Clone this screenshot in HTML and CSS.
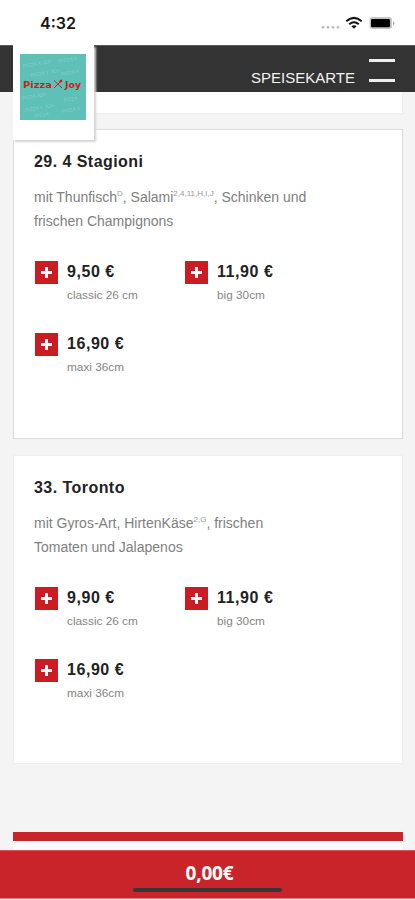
FILE: index.html
```html
<!DOCTYPE html>
<html lang="de">
<head>
<meta charset="utf-8">
<title>Speisekarte</title>
<link rel="stylesheet" href="styles.css">
</head>
<body>
<div class="screen">
  <div class="status">
    <span class="time">4:32</span>
    <svg class="signals" width="76" height="16" viewBox="0 0 76 16">
      <g fill="#bdbdbd"><circle cx="3" cy="11.3" r="1.4"/><circle cx="8" cy="11.3" r="1.4"/><circle cx="13" cy="11.3" r="1.4"/><circle cx="18" cy="11.3" r="1.4"/></g>
      <g fill="none" stroke="#111" stroke-width="2"><path d="M26.3 5.2Q34 -1.5 41.7 5.2"/><path d="M29.2 8.3Q34 4.3 38.8 8.3"/></g>
      <path d="M31.4 10.2Q34 8.4 36.6 10.2L34 12.8Z" fill="#111"/>
      <rect x="49.5" y="1" width="22.5" height="12" rx="3" fill="#c4c4c4"/>
      <rect x="51" y="3" width="19" height="8.200" rx="1.200" fill="#000"/>
      <path d="M73 5q3 2.200 0 4.500z" fill="#aaa"/>
    </svg>
  </div>
  <header class="nav">
    <span class="nav-label">SPEISEKARTE</span>
    <div class="burger"><i></i><i></i></div>
    <div class="logo">
      <svg width="66" height="66" viewBox="0 0 66 66">
        <rect width="66" height="66" fill="#5fc0b8"/>
        <g class="pattern">
          <text transform="translate(3 14) rotate(-10)">PIZZA X JOY</text>
          <text transform="translate(39 9) rotate(-10)">PIZZA X</text>
          <text transform="translate(11 23) rotate(-10)">PIZZA X JOY</text>
          <text transform="translate(41 22) rotate(-10)">PIZZA X</text>
          <text transform="translate(2 46) rotate(-10)">PIZZA JOY</text>
          <text transform="translate(44 48) rotate(-10)">PIZZA</text>
          <text transform="translate(5 58) rotate(-10)">PIZZA X JOY</text>
          <text transform="translate(42 59) rotate(-10)">PIZZA X</text>
          <text transform="translate(15 64) rotate(-10)">PIZZA</text>
        </g>
        <text class="brand" x="3" y="33.500" textLength="29" lengthAdjust="spacingAndGlyphs">Pizza</text>
        <path d="M34 26.500L42 34M34 34L40 28" stroke="#d8171c" stroke-width="1" fill="none"/>
        <ellipse cx="40.800" cy="27.200" rx="1.800" ry="1.200" transform="rotate(-45 40.800 27.200)" fill="#d8171c"/>
        <text class="brand" x="45" y="33.500" textLength="16" lengthAdjust="spacingAndGlyphs">Joy</text>
      </svg>
    </div>
  </header>
  <main class="menu">
    <div class="card previous"></div>
    <article class="card active">
      <h2>29. 4 Stagioni</h2>
      <p>mit Thunfisch<sup>D</sup>, Salami<sup>2,4,11,H,I,J</sup>, Schinken und<br>frischen Champignons</p>
      <div class="prices">
        <div class="price"><b class="add"></b><div><strong>9,50 €</strong><small>classic 26 cm</small></div></div>
        <div class="price"><b class="add"></b><div><strong>11,90 €</strong><small>big 30cm</small></div></div>
        <div class="price"><b class="add"></b><div><strong>16,90 €</strong><small>maxi 36cm</small></div></div>
      </div>
    </article>
    <article class="card">
      <h2>33. Toronto</h2>
      <p>mit Gyros-Art, HirtenKäse<sup>2,G</sup>, frischen<br>Tomaten und Jalapenos</p>
      <div class="prices">
        <div class="price"><b class="add"></b><div><strong>9,90 €</strong><small>classic 26 cm</small></div></div>
        <div class="price"><b class="add"></b><div><strong>11,90 €</strong><small>big 30cm</small></div></div>
        <div class="price"><b class="add"></b><div><strong>16,90 €</strong><small>maxi 36cm</small></div></div>
      </div>
    </article>
    <div class="next-section"></div>
  </main>
  <footer class="total"><span>0,00€</span><i class="home"></i></footer>
</div>
</body>
</html>
```
FILE: styles.css
```css
* { box-sizing: border-box; }
body { margin: 0; background: #f4f4f4; font-family: "Liberation Sans", Arial, sans-serif; }
.screen { width: 415px; height: 899px; margin-bottom: 1px; overflow: hidden; display: flex; flex-direction: column; }

.status { height: 45px; flex: none; background: #fff; display: flex; justify-content: space-between; padding: 0 19px 0 40px; }
.time { font: 600 16px/20px Inter, sans-serif; color: #151515; margin-top: 13px; }
.signals { margin-top: 16px; }

.nav { position: relative; height: 47px; flex: none; background: #333; border-top: 1px solid #5a5a5a; display: flex; justify-content: flex-end; padding-right: 20px; gap: 14px; color: #f2f2f2; }
.nav-label { font-size: 15px; line-height: 18px; margin-top: 23px; }
.burger { width: 26px; margin-top: 13px; display: flex; flex-direction: column; gap: 17px; }
.burger i { height: 3px; background: #eee; }
.logo { position: absolute; left: 13px; top: -1px; width: 81px; height: 95px; padding: 9px 7px; background: #fff; box-shadow: 2px 2px 2px #d4d4d4; z-index: 2; }
.logo svg { display: block; }
.pattern { font: 5px "Liberation Sans", sans-serif; fill: #86d2cb; }
.brand { font: bold 9.5px "DejaVu Sans", sans-serif; fill: #d8171c; }

.menu { flex: 1; min-height: 0; padding: 0 12px 0 13px; display: flex; flex-direction: column; }
.card { height: 310px; flex: none; margin-bottom: 16px; padding: 22px 20px; background: #fff; border: 1px solid #efefef; }
.card.previous { height: 22px; margin-bottom: 15px; padding: 0; border-top: 0; }
.card.active { border-color: #dcdcdc; }
h2 { margin: 0; font-size: 16px; line-height: 20px; letter-spacing: .45px; color: #222; }
p { margin: 13px 0 0; font-size: 14px; line-height: 24px; color: #808080; white-space: nowrap; }
sup { font-size: 8px; line-height: 0; vertical-align: 6px; color: #999; }
.prices { display: grid; grid-template-columns: 150px 150px; grid-auto-rows: 71.500px; margin: 27px 0 0 1px; }
.price { display: flex; gap: 9px; }
.add { width: 23px; height: 23px; margin-top: 1px; flex: none; background: linear-gradient(#fff, #fff) center / 11px 3px no-repeat, linear-gradient(#fff, #fff) center / 3px 11px no-repeat, #c91c23; }
.price strong { display: block; font-size: 16px; line-height: 24px; letter-spacing: .55px; color: #222; }
.price small { display: block; margin-top: 3px; font-size: 11.800px; line-height: 16px; color: #858585; }
.card.active + .card { height: 309px; margin-top: 0; }
.next-section { height: 18px; flex: none; margin-top: 52px; background: #fff; border-top: 9px solid #c9242a; }

.total { height: 49px; flex: none; background: #c9242a; border-top: 1px solid #d8575b; border-bottom: 1px solid #dc8083; display: flex; flex-direction: column; align-items: center; color: #fff; }
.total span { font: 700 19px/24px "Open Sans", sans-serif; letter-spacing: -.2px; margin: 10px 0 0 4px; }
.home { width: 149px; height: 4px; margin-top: 3px; border-radius: 2px; background: #343639; }
```
